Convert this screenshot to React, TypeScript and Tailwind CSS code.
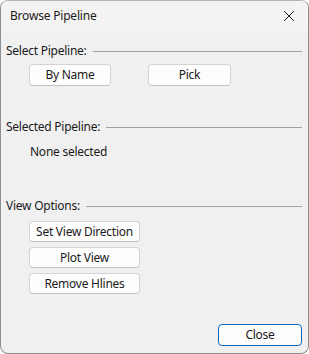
import React from "react";

function Btn({ label, w, h = 22, primary = false }: { label: string; w: string; h?: number; primary?: boolean }) {
  return (
    <div
      className={
        "flex items-center justify-center rounded-[4px] bg-[#fdfdfd] text-[12px] tracking-[-0.25px] text-[#1b1b1b] " +
        w +
        " " +
        (primary ? "border border-[#0067c0]" : "border border-[#d4d4d4] border-b-[#c2c2c2]")
      }
      style={{ height: h }}
    >
      {label}
    </div>
  );
}

function Header({ label }: { label: string }) {
  return (
    <div className="flex items-center h-[16px] leading-[16px] text-[12px] tracking-[-0.25px] text-[#1b1b1b]">
      <span className="whitespace-nowrap">{label}</span>
      <div className="flex-1 h-px bg-[#a0a0a0] ml-[6px]" />
    </div>
  );
}

export default function App() {
  return (
    <div
      className="w-[309px] h-[354px] bg-[#f0f0f0] border border-[#8f8f8f] border-t-[#b5b5b5] rounded-[8px] overflow-hidden flex flex-col"
      style={{ fontFamily: '"Noto Sans", "Liberation Sans", sans-serif' }}
    >
      <div className="h-[30px] bg-[#f3f3f3] flex items-center justify-between pl-[9px] pr-[12px] shrink-0">
        <span className="text-[12px] tracking-[-0.2px] text-[#1b1b1b]">Browse Pipeline</span>
        <svg width="12" height="12" viewBox="0 0 12 12" className="mr-[1px]">
          <path d="M1 1 L11 11 M11 1 L1 11" stroke="#1b1b1b" strokeWidth="1" />
        </svg>
      </div>
      <div className="flex-1 flex flex-col pl-[5px] pr-[6px]">
        <div className="mt-[12px]">
          <Header label="Select Pipeline:" />
        </div>
        <div className="flex mt-[5px] ml-[23px] gap-[37px]">
          <Btn label="By Name" w="w-[82px]" />
          <Btn label="Pick" w="w-[83px]" />
        </div>
        <div className="mt-[33px]">
          <Header label="Selected Pipeline:" />
        </div>
        <div className="mt-[9px] ml-[24px] h-[16px] leading-[16px] text-[12px] tracking-[-0.25px] text-[#1b1b1b]">None selected</div>
        <div className="mt-[38px]">
          <Header label="View Options:" />
        </div>
        <div className="flex flex-col mt-[7px] ml-[23px] gap-[5px]">
          <Btn label="Set View Direction" w="w-[111px]" h={21} />
          <Btn label="Plot View" w="w-[111px]" h={21} />
          <Btn label="Remove Hlines" w="w-[111px]" h={21} />
        </div>
        <div className="mt-auto mb-[7px] flex justify-end">
          <Btn label="Close" w="w-[84px]" primary />
        </div>
      </div>
    </div>
  );
}
